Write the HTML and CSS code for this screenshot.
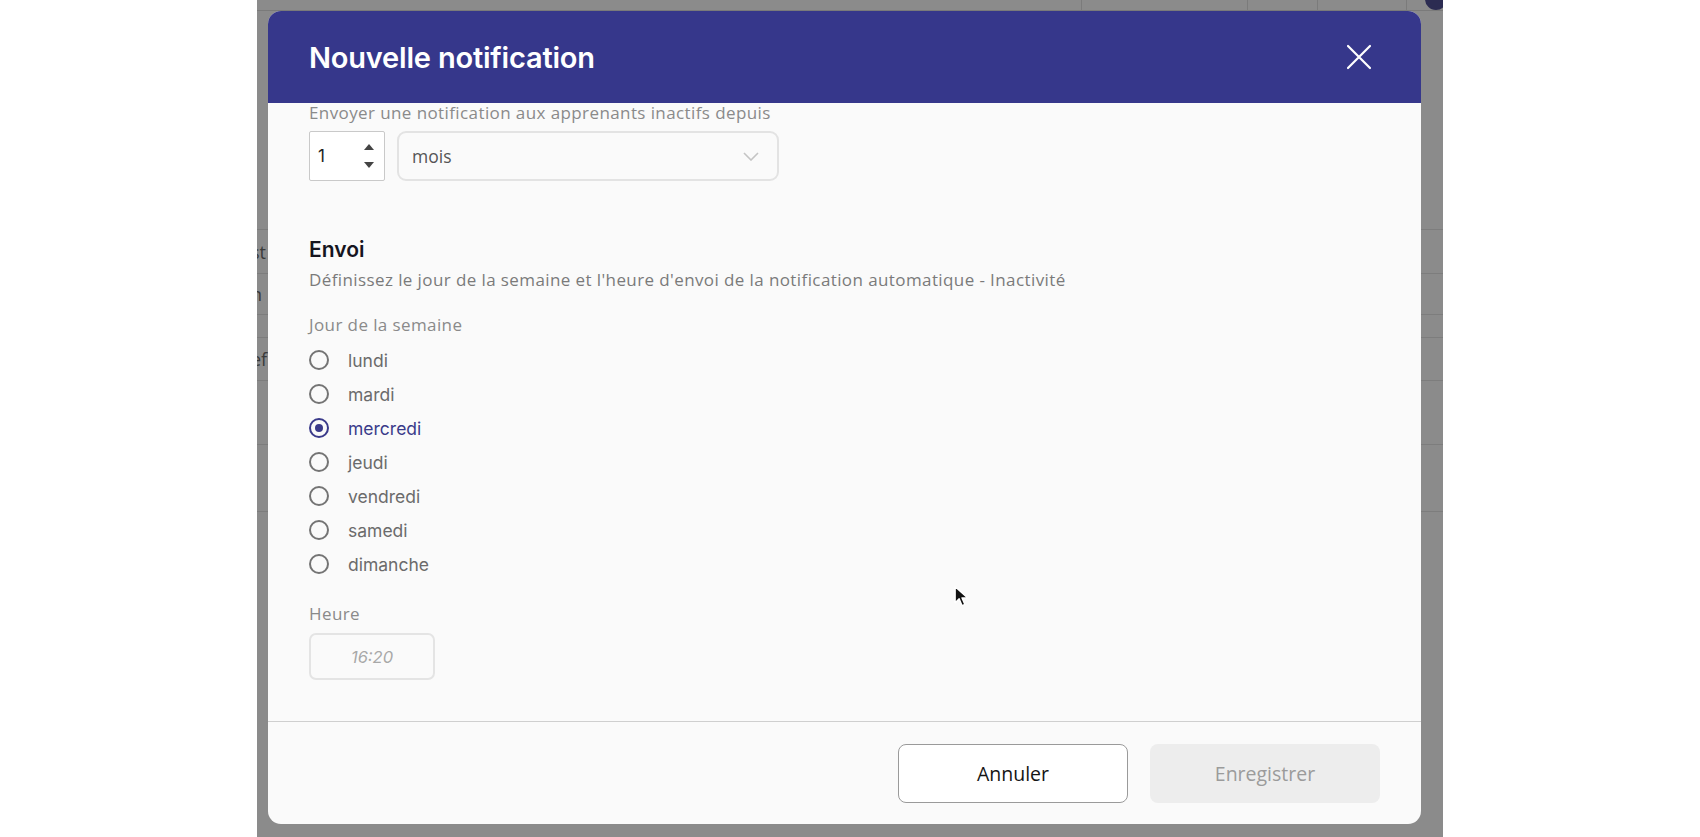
FILE: index.html
```html
<!DOCTYPE html>
<html>
<head>
    <title>Nouvelle notification</title>
    <link rel="stylesheet" href="styles.css">
</head>
<body>
    <div class="stage">
        <!-- page behind the overlay -->
        <div class="backdrop">
            <div class="bg-top">
                <span class="bg-col" style="left: 824px"></span>
                <span class="bg-col" style="left: 990px"></span>
                <span class="bg-col" style="left: 1060px"></span>
                <span class="bg-col" style="left: 1149px"></span>
                <span class="bg-avatar"></span>
            </div>
            <div class="bg-row" style="height: 218px"></div>
            <div class="bg-row" style="height: 43px"><span class="bg-text">st</span></div>
            <div class="bg-row" style="height: 40px"><span class="bg-text">n</span></div>
            <div class="bg-row" style="height: 22px"></div>
            <div class="bg-row" style="height: 42px"><span class="bg-text">ef</span></div>
            <div class="bg-row" style="height: 63px"></div>
            <div class="bg-row" style="height: 66px"></div>
        </div>

        <div class="modal">
            <div class="modal-header">
                <h1>Nouvelle notification</h1>
                <button class="close-btn" aria-label="Fermer">
                    <svg width="26" height="26" viewBox="0 0 26 26">
                        <path d="M2 2 L24 24 M24 2 L2 24" stroke="#fff" stroke-width="2.2" stroke-linecap="round"/>
                    </svg>
                </button>
            </div>

            <div class="modal-body">
                <p class="field-label first">Envoyer une notification aux apprenants inactifs depuis</p>
                <div class="delay-row">
                    <div class="number-input">
                        <span>1</span>
                        <div class="spinner">
                            <svg width="10" height="6" viewBox="0 0 10 6"><path d="M0 6 L5 0 L10 6 Z" fill="#444"/></svg>
                            <svg width="10" height="6" viewBox="0 0 10 6"><path d="M0 0 L5 6 L10 0 Z" fill="#444"/></svg>
                        </div>
                    </div>
                    <div class="select">
                        <span>mois</span>
                        <svg width="16" height="9" viewBox="0 0 16 9"><path d="M1 1 L8 8 L15 1" fill="none" stroke="#c4c4c4" stroke-width="1.6"/></svg>
                    </div>
                </div>

                <h2>Envoi</h2>
                <p class="description">Définissez le jour de la semaine et l'heure d'envoi de la notification automatique - Inactivité</p>

                <p class="field-label">Jour de la semaine</p>
                <div class="radio-list">
                    <label class="radio"><span class="dot"></span>lundi</label>
                    <label class="radio"><span class="dot"></span>mardi</label>
                    <label class="radio checked"><span class="dot"></span>mercredi</label>
                    <label class="radio"><span class="dot"></span>jeudi</label>
                    <label class="radio"><span class="dot"></span>vendredi</label>
                    <label class="radio"><span class="dot"></span>samedi</label>
                    <label class="radio"><span class="dot"></span>dimanche</label>
                </div>

                <p class="field-label hour">Heure</p>
                <div class="time-input">16:20</div>
            </div>

            <div class="modal-footer">
                <button class="btn btn-cancel">Annuler</button>
                <button class="btn btn-save">Enregistrer</button>
            </div>
        </div>

        <svg class="cursor" width="16" height="24" viewBox="0 0 14 20">
            <path d="M1 1 L1 15 L4.5 11.5 L7 17.5 L9.5 16.5 L7 10.8 L12 10.8 Z" fill="#111" stroke="#fff" stroke-width="1.2" stroke-linejoin="round"/>
        </svg>
    </div>
</body>
</html>
```

FILE: styles.css
```css
html, body {
    margin: 0;
    height: 837px;
    overflow: hidden;
    background: #ffffff;
    font-family: "Open Sans", Lato, sans-serif;
}
.stage {
    position: relative;
    margin-left: 257px;
    width: 1186px;
    height: 837px;
    background: #8b8b8b;
    overflow: hidden;
}

/* faded page behind the overlay */
.bg-top {
    position: relative;
    height: 10px;
    border-bottom: 1px solid #7a7a7a;
}
.bg-col {
    position: absolute;
    top: 0;
    width: 1px;
    height: 10px;
    background: #7b7b7b;
}
.bg-avatar {
    position: absolute;
    right: -4px;
    top: -12px;
    width: 22px;
    height: 22px;
    border-radius: 50%;
    background: #2c2c52;
}
.bg-row {
    border-bottom: 1px solid #7d7d7d;
    display: flex;
    align-items: center;
    font-size: 18px;
    color: #3a3a3a;
}
.bg-text {
    margin-left: -6px;
}

/* modal */
.modal {
    position: absolute;
    left: 11px;
    top: 11px;
    width: 1153px;
    height: 813px;
    background: #fafafa;
    border-radius: 13px;
    overflow: hidden;
    display: flex;
    flex-direction: column;
}
.modal-header {
    height: 92px;
    flex-shrink: 0;
    background: #36378b;
    display: flex;
    align-items: center;
    justify-content: space-between;
    padding: 0 49px 0 41px;
}
.modal-header h1 {
    margin: 0;
    color: #ffffff;
    font-family: Inter, "Noto Sans", sans-serif;
    font-size: 29px;
    font-weight: 600;
    letter-spacing: -0.2px;
}
.close-btn {
    background: none;
    border: none;
    padding: 0;
    width: 26px;
    height: 26px;
    cursor: pointer;
}

.modal-body {
    flex: 1;
    padding: 0 41px;
    overflow: hidden;
}
.field-label {
    margin: 0;
    font-size: 17px;
    line-height: 20px;
    letter-spacing: 0.4px;
    color: #8a8a8a;
}
.delay-row {
    display: flex;
    gap: 12px;
    margin-top: 8px;
}
.number-input {
    width: 76px;
    height: 50px;
    box-sizing: border-box;
    border: 1px solid #c9c9c9;
    border-radius: 2px;
    background: #ffffff;
    display: flex;
    align-items: center;
    justify-content: space-between;
    padding: 0 10px 0 8px;
    font-family: Inter, sans-serif;
    font-size: 17px;
    color: #222;
}
.spinner {
    display: flex;
    flex-direction: column;
    gap: 12px;
}
.spinner svg {
    display: block;
}
.select {
    width: 382px;
    height: 50px;
    box-sizing: border-box;
    border: 2px solid #e3e3e3;
    border-radius: 9px;
    background: #fafafa;
    display: flex;
    align-items: center;
    justify-content: space-between;
    padding: 0 18px 0 13px;
    font-size: 17.5px;
    color: #555;
}

h2 {
    margin: 56px 0 0;
    font-family: Inter, "Noto Sans", sans-serif;
    font-size: 21px;
    line-height: 26px;
    font-weight: 600;
    color: #15151f;
}
.description {
    margin: 7px 0 0;
    font-size: 17px;
    line-height: 20px;
    letter-spacing: 0.4px;
    color: #7a7a7a;
}
.description + .field-label {
    margin-top: 25px;
}

.radio-list {
    margin-top: 8px;
    display: flex;
    flex-direction: column;
}
.radio {
    height: 34px;
    display: flex;
    align-items: center;
    gap: 19px;
    font-family: Inter, sans-serif;
    font-size: 17.5px;
    color: #6b6b6b;
}
.dot {
    width: 20px;
    height: 20px;
    box-sizing: border-box;
    border: 2px solid #747474;
    border-radius: 50%;
    display: flex;
    align-items: center;
    justify-content: center;
}
.radio.checked {
    color: #3a3a8a;
}
.radio.checked .dot {
    border-color: #3a3a8a;
}
.radio.checked .dot::after {
    content: "";
    width: 8px;
    height: 8px;
    border-radius: 50%;
    background: #3a3a8a;
}

.field-label.hour {
    margin-top: 23px;
}
.time-input {
    margin-top: 9px;
    width: 126px;
    height: 47px;
    box-sizing: border-box;
    border: 2px solid #e4e4e4;
    border-radius: 7px;
    display: flex;
    align-items: center;
    justify-content: center;
    font-family: Inter, sans-serif;
    font-style: italic;
    font-size: 16.5px;
    color: #a8a8a8;
}

.modal-footer {
    height: 103px;
    flex-shrink: 0;
    border-top: 1px solid #cfcfcf;
    display: flex;
    justify-content: flex-end;
    align-items: flex-start;
    gap: 22px;
    padding: 22px 41px 0 0;
    box-sizing: border-box;
}
.btn {
    width: 230px;
    height: 59px;
    border-radius: 8px;
    font-family: "Open Sans", sans-serif;
    font-size: 19.5px;
    cursor: pointer;
}
.btn-cancel {
    background: #ffffff;
    border: 1px solid #9a9a9a;
    color: #151515;
}
.btn-save {
    background: #ededed;
    border: none;
    color: #9b9b9b;
}

.cursor {
    position: absolute;
    left: 697px;
    top: 585px;
}
```
